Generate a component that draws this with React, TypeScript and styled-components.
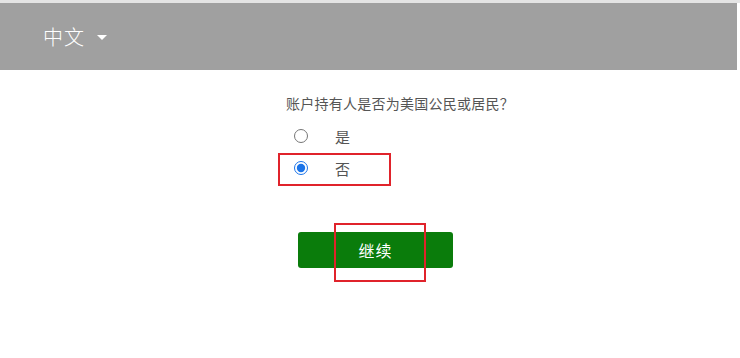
import React from 'react';
import styled, { createGlobalStyle } from 'styled-components';

const GlobalStyle = createGlobalStyle`
  html, body {
    margin: 0;
    padding: 0;
    background: #ffffff;
    font-family: "Noto Sans", "Noto Sans CJK SC", sans-serif;
  }
`;

const Page = styled.div`
  width: 740px;
  height: 358px;
  border-top: 3px solid #e4e4e4;
  box-sizing: border-box;
  overflow: hidden;
`;

const Header = styled.header`
  width: 737px;
  height: 67px;
  background: #a0a0a0;
  display: flex;
  align-items: center;
  padding-left: 43px;
  box-sizing: border-box;
`;

const LangButton = styled.div`
  display: flex;
  align-items: center;
  gap: 12px;
  color: #ffffff;
  font-size: 20px;
  font-weight: 300;
  font-family: "Noto Sans CJK SC", sans-serif;
  letter-spacing: 1px;
  cursor: pointer;
`;

const Caret = styled.span`
  width: 0;
  height: 0;
  border-left: 5px solid transparent;
  border-right: 5px solid transparent;
  border-top: 5px solid #ffffff;
  margin-top: 2px;
`;

const Main = styled.main`
  position: relative;
  padding: 24px 0 0 286px;
  display: flex;
  flex-direction: column;
`;

const Question = styled.div`
  font-size: 14px;
  color: #555555;
  line-height: 18px;
  letter-spacing: 0.25px;
  font-family: "Noto Sans CJK SC", sans-serif;
  margin-bottom: 14px;
`;

const Options = styled.div`
  display: flex;
  flex-direction: column;
  gap: 12px;
  padding-left: 8px;
`;

const Option = styled.label`
  display: flex;
  align-items: center;
  height: 20px;
  font-size: 15px;
  color: #555555;
  font-family: "Noto Sans CJK SC", sans-serif;
`;

const Radio = styled.input`
  width: 14px;
  height: 14px;
  margin: 0 27px 0 0;
  accent-color: #1a73e8;
`;

const ContinueButton = styled.button`
  margin: 54px 0 0 12px;
  width: 155px;
  height: 36px;
  border: none;
  border-radius: 3px;
  background: #0a7c0b;
  color: #ffffff;
  font-size: 16px;
  font-family: "Noto Sans CJK SC", sans-serif;
  letter-spacing: 1px;
  cursor: pointer;
`;

const Highlight = styled.div<{ $x: number; $y: number; $w: number; $h: number }>`
  position: absolute;
  left: ${p => p.$x}px;
  top: ${p => p.$y}px;
  width: ${p => p.$w}px;
  height: ${p => p.$h}px;
  border: 2px solid #e0232b;
  box-sizing: border-box;
  pointer-events: none;
`;

export default function App() {
  const [answer, setAnswer] = React.useState('no');
  return (
    <>
      <GlobalStyle />
      <Page>
        <Header>
          <LangButton>
            中文
            <Caret />
          </LangButton>
        </Header>
        <Main>
          <Question>账户持有人是否为美国公民或居民？</Question>
          <Options>
            <Option>
              <Radio type="radio" name="us" checked={answer === 'yes'} onChange={() => setAnswer('yes')} />
              是
            </Option>
            <Option>
              <Radio type="radio" name="us" checked={answer === 'no'} onChange={() => setAnswer('no')} />
              否
            </Option>
          </Options>
          <ContinueButton>继续</ContinueButton>
          <Highlight $x={278} $y={83} $w={113} $h={33} />
          <Highlight $x={334} $y={153} $w={92} $h={59} />
        </Main>
      </Page>
    </>
  );
}
